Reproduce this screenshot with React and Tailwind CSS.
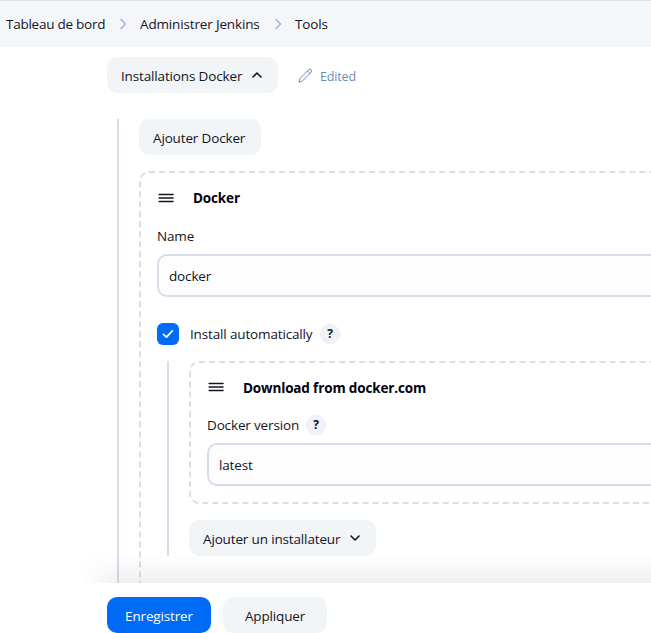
import React from "react";

const BUTTON = "flex h-9 items-center rounded-[10px] bg-[#f2f5f8] pt-0.5 whitespace-nowrap";

function Chevron({ className, d }) {
  return (
    <svg className={className} viewBox="0 0 12 12" fill="none" stroke="currentColor" strokeLinecap="round" strokeLinejoin="round">
      <path d={d} />
    </svg>
  );
}

function Handle() {
  return (
    <svg className="ml-px h-[10px] w-4 shrink-0" viewBox="0 0 16 10" fill="none" stroke="#14141f" strokeWidth="1.6" strokeLinecap="round">
      <path d="M1.2 1.5H15M1.2 5H15M1.2 8.5H15" />
    </svg>
  );
}

function Help() {
  return (
    <span className="flex size-5 items-center justify-center rounded-full border border-[#e9edf2] bg-[#eff2f6] text-[12px] font-bold leading-none">
      ?
    </span>
  );
}

function Field({ value }) {
  return (
    <div className="flex h-[43px] items-center rounded-[10px] border-2 border-[#d8dcea] bg-[#fdfdfd] px-[10px]">
      <span>{value}</span>
    </div>
  );
}

export default function App() {
  return (
    <div className="flex h-[633px] w-[651px] flex-col overflow-hidden bg-white font-['Open_Sans','Noto_Sans',sans-serif] text-[13.5px] leading-5 tracking-[-0.15px] text-[#14141f]">
      <nav className="flex h-[47px] shrink-0 items-center border-t border-[#dfe1dd] bg-[#f5f6f9] pl-[6px] whitespace-nowrap">
        <span className="w-[99px] tracking-[-0.25px]">Tableau de bord</span>
        <Chevron className="ml-3 size-3 stroke-[1.5] text-[#9fb4d4]" d="M4 1.5 8.5 6 4 10.5" />
        <span className="ml-[11px] w-[120px]">Administrer Jenkins</span>
        <Chevron className="ml-3 size-3 stroke-[1.5] text-[#9fb4d4]" d="M4 1.5 8.5 6 4 10.5" />
        <span className="ml-[11px]">Tools</span>
      </nav>

      <main className="relative h-[536px] shrink-0 overflow-hidden pl-[107px] pt-[10px]">
        <div className="flex items-center">
          <button className={`${BUTTON} w-[171px] pl-[14px]`}>
            <span className="w-[122px] text-left">Installations Docker</span>
            <Chevron className="mb-0.5 ml-2 size-3 stroke-[1.6]" d="M2 8 6 4 10 8" />
          </button>
          <div className="ml-[20px] flex items-center text-[#6b8bb8]">
            <svg className="size-[15px]" viewBox="0 0 15 15" fill="none" stroke="currentColor" strokeWidth="1" strokeLinecap="round" strokeLinejoin="round">
              <path d="M1 13.8 2 10.4 10.7 1.7A1.75 1.75 0 0 1 13.2 4.2L4.5 12.9Z" />
              <path d="m9.4 3 2.5 2.5" />
            </svg>
            <span className="ml-[7px] pt-[3px] text-[12.5px]">Edited</span>
          </div>
        </div>

        <section className="mt-[26px] w-[700px] border-l-2 border-[#d8dcea] pl-[20px] ml-[10px]">
          <button className={`${BUTTON} w-[122px] pl-[14px]`}>Ajouter Docker</button>

          <div className="mt-4 h-[460px] rounded-[10px] border-2 border-dashed border-[#d6e0eb] px-4">
            <div className="flex h-5 mt-[15px] items-center">
              <Handle />
              <b className="ml-[19px] text-[#000010]">Docker</b>
            </div>
            <div className="mt-[18px] mb-2">Name</div>
            <Field value="docker" />

            <div className="mt-[26px] flex h-[22px] items-center">
              <span className="flex size-[22px] items-center justify-center rounded-[6px] bg-[#006bf7] text-white">
                <Chevron className="size-3 stroke-[1.8]" d="M1.5 6.4 4.5 9.2 10.3 2.8" />
              </span>
              <span className="ml-[11px] mr-[7px] w-[123px] whitespace-nowrap">Install automatically</span>
              <Help />
            </div>

            <div className="ml-[10px] mt-4 h-[195px] border-l-2 border-[#d8dcea] pl-5">
              <div className="flow-root h-[143px] rounded-[10px] border-2 border-dashed border-[#d6e0eb] px-4">
                <div className="mt-[15px] flex h-5 items-center">
                  <div className="pb-0.5">
                    <Handle />
                  </div>
                  <b className="ml-[19px] text-[#000010]">Download from docker.com</b>
                </div>
                <div className="mb-2 mt-[17px] flex h-5 items-center">
                  <span className="mr-[7px] w-[92px] whitespace-nowrap">Docker version</span>
                  <Help />
                </div>
                <Field value="latest" />
              </div>
              <button className={`${BUTTON} mt-4 w-[187px] pl-[14px]`}>
                <span className="w-[138px] text-left">Ajouter un installateur</span>
                <Chevron className="mb-0.5 ml-2 size-3 stroke-[1.6]" d="M2 4 6 8 10 4" />
              </button>
            </div>
          </div>
        </section>

        <div className="pointer-events-none absolute bottom-0 left-[80px] right-0 h-[30px] bg-linear-to-b from-black/0 to-black/6 mask-r-from-100% mask-l-from-[530px] mask-l-to-100%" />
      </main>

      <footer className="flex shrink-0 gap-3 bg-white pl-[107px] pt-[14px]">
        <button className="h-9 w-[104px] rounded-[10px] bg-[#006bf7] pt-0.5 text-white">Enregistrer</button>
        <button className="h-9 w-[104px] rounded-[10px] bg-[#f2f5f8] pt-0.5">Appliquer</button>
      </footer>
    </div>
  );
}
